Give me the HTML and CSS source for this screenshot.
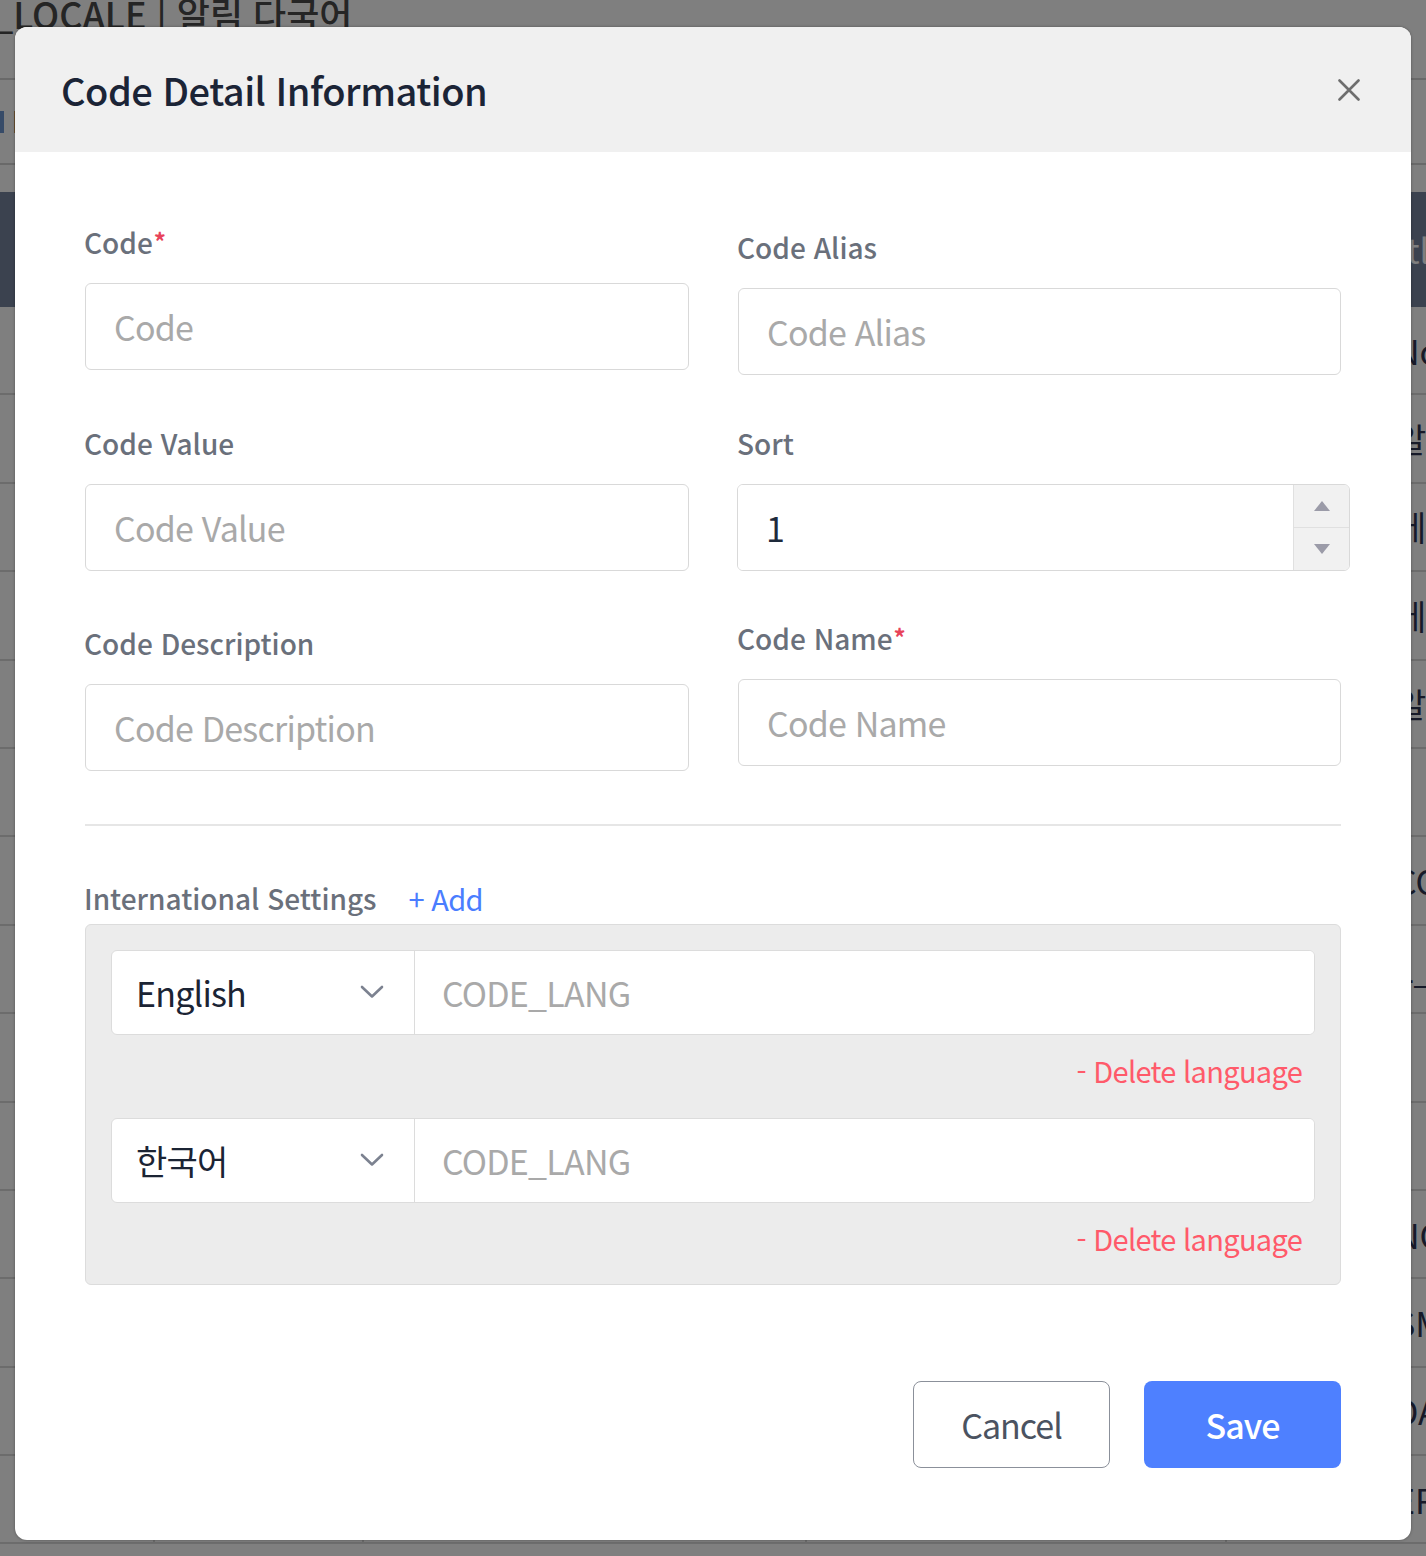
FILE: index.html
```html
<!DOCTYPE html>
<html lang="ko">
<head>
<meta charset="utf-8">
<title>Code Detail Information</title>
<link rel="stylesheet" href="styles.css">
</head>
<body>
<div class="page">
  <div class="page-title">CODE_LOCALE | 알림 다국어</div>
  <div class="toolbar"><span class="tb-blue"></span><span class="tb-orange"></span></div>
  <div class="table">
    <div class="tr thead">
      <div class="td"></div><div class="td"></div><div class="td"></div><div class="td"></div><div class="td last">Title</div>
    </div>
    <div class="tr"><div class="td"></div><div class="td"></div><div class="td"></div><div class="td"></div><div class="td last">Normal</div></div>
    <div class="tr"><div class="td"></div><div class="td"></div><div class="td"></div><div class="td"></div><div class="td last">알림 하</div></div>
    <div class="tr"><div class="td"></div><div class="td"></div><div class="td"></div><div class="td"></div><div class="td last">메시</div></div>
    <div class="tr"><div class="td"></div><div class="td"></div><div class="td"></div><div class="td"></div><div class="td last">메시</div></div>
    <div class="tr"><div class="td"></div><div class="td"></div><div class="td"></div><div class="td"></div><div class="td last">알줄</div></div>
    <div class="tr"><div class="td"></div><div class="td"></div><div class="td"></div><div class="td"></div><div class="td last"></div></div>
    <div class="tr"><div class="td"></div><div class="td"></div><div class="td"></div><div class="td"></div><div class="td last">CODE</div></div>
    <div class="tr"><div class="td"></div><div class="td"></div><div class="td"></div><div class="td"></div><div class="td last">L_-</div></div>
    <div class="tr"><div class="td"></div><div class="td"></div><div class="td"></div><div class="td"></div><div class="td last"></div></div>
    <div class="tr"><div class="td"></div><div class="td"></div><div class="td"></div><div class="td"></div><div class="td last"></div></div>
    <div class="tr"><div class="td"></div><div class="td"></div><div class="td"></div><div class="td"></div><div class="td last">NOD_</div></div>
    <div class="tr"><div class="td"></div><div class="td"></div><div class="td"></div><div class="td"></div><div class="td last">SMA</div></div>
    <div class="tr"><div class="td"></div><div class="td"></div><div class="td"></div><div class="td"></div><div class="td last">DATA</div></div>
    <div class="tr"><div class="td"></div><div class="td"></div><div class="td"></div><div class="td"></div><div class="td last">ERRE</div></div>
  </div>
</div>
<div class="overlay"></div>

<div class="modal">
  <div class="modal-header">
    <h2 class="modal-title">Code Detail Information</h2>
    <button class="close" type="button" aria-label="Close">
      <svg width="22" height="22" viewBox="0 0 22 22"><path d="M1.5 1.5 L20.5 20.5 M20.5 1.5 L1.5 20.5" stroke="#6e6e6e" stroke-width="2.6" stroke-linecap="round" fill="none"/></svg>
    </button>
  </div>

  <div class="modal-body">
    <div class="form-grid">
      <div class="field req">
        <label class="label">Code<span class="star">*</span></label>
        <input class="input" type="text" placeholder="Code">
      </div>
      <div class="field">
        <label class="label">Code Alias</label>
        <input class="input" type="text" placeholder="Code Alias">
      </div>
      <div class="field">
        <label class="label">Code Value</label>
        <input class="input" type="text" placeholder="Code Value">
      </div>
      <div class="field">
        <label class="label">Sort</label>
        <div class="number">
          <input class="number-input" type="text" value="1">
          <div class="spinner">
            <span class="spin up"><svg width="16" height="10" viewBox="0 0 16 10"><path d="M8 0 L16 10 L0 10 Z" fill="#9b9ba8"/></svg></span>
            <span class="spin down"><svg width="16" height="10" viewBox="0 0 16 10"><path d="M0 0 L16 0 L8 10 Z" fill="#9b9ba8"/></svg></span>
          </div>
        </div>
      </div>
      <div class="field last-row">
        <label class="label">Code Description</label>
        <input class="input" type="text" placeholder="Code Description">
      </div>
      <div class="field req last-row">
        <label class="label">Code Name<span class="star">*</span></label>
        <input class="input" type="text" placeholder="Code Name">
      </div>
    </div>

    <div class="divider"></div>

    <div class="intl-head">
      <span class="label intl-label">International Settings</span>
      <a class="add">+ Add</a>
    </div>

    <div class="intl-box">
      <div class="lang-row">
        <div class="lang-select">
          <span class="lang-name">English</span>
          <svg class="chev" width="24" height="14" viewBox="0 0 24 14"><path d="M2 2 L12 11.5 L22 2" stroke="#7c8290" stroke-width="2.6" fill="none" stroke-linecap="round" stroke-linejoin="round"/></svg>
        </div>
        <input class="lang-input" type="text" placeholder="CODE_LANG">
      </div>
      <div class="del">- Delete language</div>

      <div class="lang-row">
        <div class="lang-select">
          <span class="lang-name">한국어</span>
          <svg class="chev" width="24" height="14" viewBox="0 0 24 14"><path d="M2 2 L12 11.5 L22 2" stroke="#7c8290" stroke-width="2.6" fill="none" stroke-linecap="round" stroke-linejoin="round"/></svg>
        </div>
        <input class="lang-input" type="text" placeholder="CODE_LANG">
      </div>
      <div class="del">- Delete language</div>
    </div>

    <div class="modal-footer">
      <button class="btn btn-cancel" type="button">Cancel</button>
      <button class="btn btn-save" type="button">Save</button>
    </div>
  </div>
</div>
</body>
</html>
```

FILE: styles.css
```css
* { box-sizing: border-box; }

html, body {
  margin: 0;
  padding: 0;
}

body {
  width: 1426px;
  height: 1556px;
  overflow: hidden;
  position: relative;
  background: #ffffff;
  font-family: "Noto Sans CJK KR", "Noto Sans", sans-serif;
}

/* ---------- background page ---------- */
.page {
  width: 1426px;
}

.page-title {
  height: 87px;
  margin-left: -103px;
  margin-top: -7px;
  font-size: 36px;
  line-height: 40px;
  font-weight: 500;
  color: #4a4a4a;
  border-bottom: 2px solid #d2d2d2;
  white-space: nowrap;
}

.toolbar {
  height: 85px;
  border-bottom: 2px solid #d2d2d2;
  display: flex;
  align-items: center;
  gap: 10px;
}

.tb-blue {
  width: 4px;
  height: 22px;
  background: #6e96d0;
}

.tb-orange {
  width: 4px;
  height: 22px;
  background: #d2a060;
}

.table {
  margin-top: 27px;
}

.tr {
  display: grid;
  grid-template-columns: 153px 209px 443px 420px 1fr;
  height: 88.4px;
  border-bottom: 2px solid #d8d8d8;
}

.tr.thead {
  height: 115px;
  background: #76849f;
  border-bottom: none;
}

.td {
  border-left: 2px solid #d8d8d8;
}

.td:first-child { border-left: none; }

.thead .td { border-left-color: #76849f; }

.td.last {
  padding-left: 168px;
  display: flex;
  align-items: center;
  font-size: 34px;
  color: #2e3452;
  white-space: nowrap;
  overflow: hidden;
}

.thead .td.last { color: #ffffff; padding-left: 150px; }

.overlay {
  position: absolute;
  inset: 0;
  background: rgba(0, 0, 0, 0.5);
}

/* ---------- modal ---------- */
.modal {
  position: absolute;
  left: 15px;
  top: 27px;
  width: 1396px;
  height: 1513px;
  background: #ffffff;
  border-radius: 12px;
  overflow: hidden;
  box-shadow: 0 0 3px rgba(0, 0, 0, 0.35);
}

.modal-header {
  height: 125px;
  background: #f0f0f0;
  display: flex;
  align-items: center;
  justify-content: space-between;
  padding: 0 51px 0 46px;
}

.modal-title {
  margin: 0;
  font-size: 38px;
  line-height: 48px;
  font-weight: 500;
  letter-spacing: -0.5px;
  color: #1b2436;
}

.close {
  border: none;
  background: none;
  padding: 0;
  width: 22px;
  height: 22px;
  display: flex;
}

.modal-body {
  padding: 70px 70px 0 69px;
}

.form-grid {
  display: grid;
  grid-template-columns: 605px 604px;
  column-gap: 48px;
  row-gap: 43px;
  align-items: start;
}

.field {
  display: flex;
  flex-direction: column;
}

.field.req {
  margin-top: -5px;
}

.field.last-row {
  margin-top: 4px;
}

.field.req.last-row {
  margin-top: -1px;
}

.label {
  font-size: 28px;
  line-height: 40px;
  height: 40px;
  font-weight: 500;
  color: #6a707b;
  margin-top: 5px;
  margin-bottom: 21px;
}

.star {
  color: #e8435a;
  font-size: 24px;
  line-height: 1;
  font-weight: 700;
  margin-left: 1px;
  position: relative;
  top: -3px;
}

.input,
.number-input,
.lang-input {
  font-family: "Noto Sans CJK KR", "Noto Sans", sans-serif;
  font-size: 34px;
  letter-spacing: -0.8px;
  color: #1e2a3b;
  outline: none;
}

.input {
  height: 87px;
  width: calc(100% - 1px);
  margin-left: 1px;
  border: 1.5px solid #d9d9d9;
  border-radius: 6px;
  padding: 0 0 0 28px;
  background: #ffffff;
}

.input::placeholder,
.lang-input::placeholder {
  color: #a9a9a9;
}

.number {
  display: flex;
  height: 87px;
  width: calc(100% + 9px);
  border: 1.5px solid #d9d9d9;
  border-radius: 6px;
  overflow: hidden;
}

.number-input {
  flex: 1;
  border: none;
  padding: 0 0 0 28px;
  min-width: 0;
}

.spinner {
  width: 56px;
  display: flex;
  flex-direction: column;
  background: #f1f1f1;
  border-left: 1.5px solid #e0e0e0;
}

.spin {
  flex: 1;
  display: flex;
  align-items: center;
  justify-content: center;
}

.spin.up { border-bottom: 1.5px solid #e0e0e0; }

.divider {
  height: 1.5px;
  background: #e6e6e6;
  margin-top: 53px;
  margin-left: 1px;
}

.intl-head {
  margin-top: 52px;
  display: flex;
  align-items: center;
  gap: 32px;
  height: 40px;
}

.intl-label {
  margin: 0;
}

.add {
  font-size: 29px;
  letter-spacing: -0.7px;
  line-height: 40px;
  color: #4a7dff;
  cursor: pointer;
}

.intl-box {
  margin-top: 6px;
  margin-left: 1px;
  background: #ececec;
  border: 1.5px solid #dcdcdc;
  border-radius: 6px;
  padding: 25px 25px 24px 25px;
}

.lang-row {
  display: flex;
  height: 85px;
  background: #ffffff;
  border: 1.5px solid #dcdcdc;
  border-radius: 6px;
  overflow: hidden;
}

.lang-select {
  width: 303px;
  flex: none;
  display: flex;
  align-items: center;
  justify-content: space-between;
  padding: 0 30px 0 24px;
  border-right: 1.5px solid #dcdcdc;
}

.lang-name {
  font-size: 34px;
  letter-spacing: -0.8px;
  color: #1b2434;
}

.lang-input {
  flex: 1;
  border: none;
  padding: 0 0 0 27px;
  min-width: 0;
  background: #ffffff;
}

.del {
  text-align: right;
  font-size: 29px;
  letter-spacing: -0.7px;
  line-height: 44px;
  color: #ff5a6a;
  margin: 13px 13px 26px 0;
}

.del:last-child { margin-bottom: 0; }

.modal-footer {
  margin-top: 96px;
  display: flex;
  justify-content: flex-end;
  gap: 34px;
}

.btn {
  font-family: "Noto Sans CJK KR", "Noto Sans", sans-serif;
  width: 197px;
  height: 87px;
  border-radius: 8px;
  font-size: 34px;
  letter-spacing: -1px;
  cursor: pointer;
}

.btn-cancel {
  background: #ffffff;
  border: 1.5px solid #8b909a;
  color: #4b5361;
}

.btn-save {
  background: #4e80ff;
  border: none;
  color: #ffffff;
  font-weight: 500;
}
```
